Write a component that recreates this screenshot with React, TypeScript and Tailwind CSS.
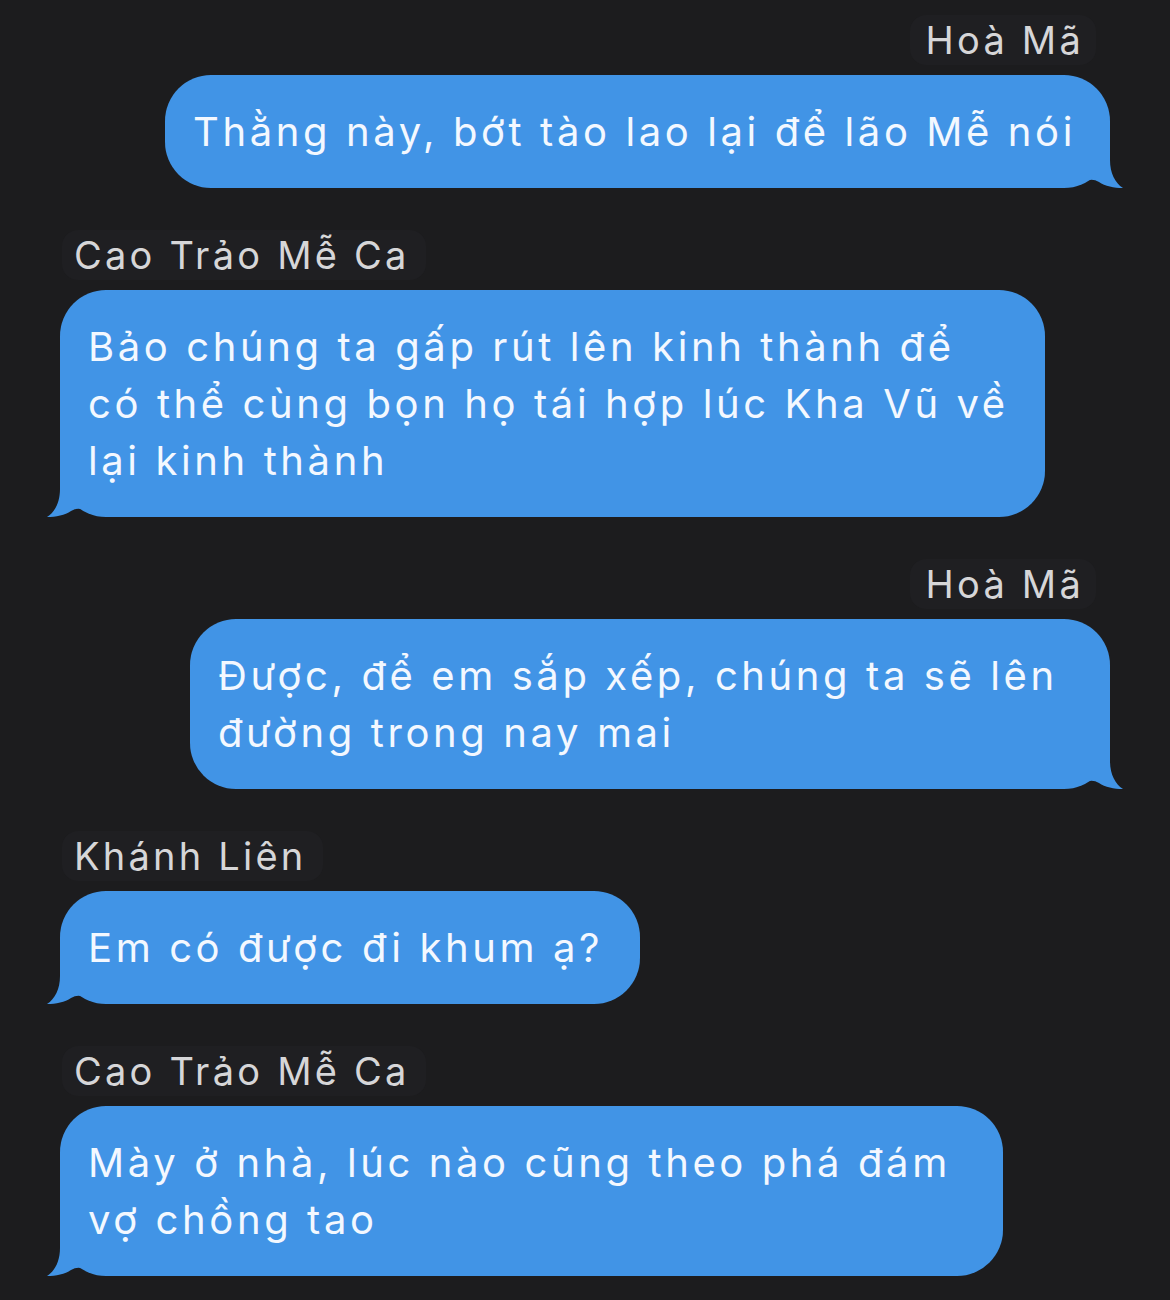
import React from "react";

type Msg = {
  name: string;
  side: "left" | "right";
  lines: string[];
  width: string;
};

const messages: Msg[] = [
  { name: "Hoà Mã", side: "right", lines: ["Thằng này, bớt tào lao lại để lão Mễ nói"], width: "w-[945px]" },
  {
    name: "Cao Trảo Mễ Ca",
    side: "left",
    lines: ["Bảo chúng ta gấp rút lên kinh thành để", "có thể cùng bọn họ tái hợp lúc Kha Vũ về", "lại kinh thành"],
    width: "w-[985px]",
  },
  { name: "Hoà Mã", side: "right", lines: ["Được, để em sắp xếp, chúng ta sẽ lên", "đường trong nay mai"], width: "w-[920px]" },
  { name: "Khánh Liên", side: "left", lines: ["Em có được đi khum ạ?"], width: "w-[580px]" },
  { name: "Cao Trảo Mễ Ca", side: "left", lines: ["Mày ở nhà, lúc nào cũng theo phá đám", "vợ chồng tao"], width: "w-[943px]" },
];

function Tail({ side }: { side: "left" | "right" }) {
  // bubble tail, drawn at the bottom corner
  return (
    <svg
      width="44"
      height="48"
      viewBox="0 0 44 48"
      className={`absolute bottom-0 ${side === "right" ? "right-[-13px]" : "left-[-13px] -scale-x-100"}`}
    >
      <path
        d="M0 0 L31 0 L31 20 C31 33 36 43 44 48 C35 48 26 46 20 42 Q15 39 10 40 L0 32 Z"
        fill="#4194e6"
      />
    </svg>
  );
}

function Bubble({ msg }: { msg: Msg }) {
  const right = msg.side === "right";
  return (
    <div className={`flex flex-col ${right ? "items-end" : "items-start"}`}>
      <div
        className={`h-[50px] leading-[50px] rounded-2xl bg-[#1f1f22] text-[38px] tracking-[0.085em] text-[#d6d6d8] ${
          right ? "mr-[14px] pl-4 pr-3" : "ml-[2px] pl-3 pr-4"
        }`}
      >
        {msg.name}
      </div>
      <div
        className={`relative mt-[10px] ${msg.width} rounded-[46px] bg-[#4194e6] pl-[28px] pr-[20px] py-[28px] text-[40px] tracking-[0.09em] leading-[57px] text-[#f3f8ff] whitespace-nowrap`}
      >
        {msg.lines.map((l, i) => (
          <div key={i}>{l}</div>
        ))}
        <Tail side={msg.side} />
      </div>
    </div>
  );
}

export default function App() {
  return (
    <div
      className="min-h-[1300px] w-[1170px] bg-[#1c1c1e] pt-[15px] pl-[60px] pr-[60px] flex flex-col gap-[42px]"
      style={{ fontFamily: "Inter, 'Noto Sans', sans-serif" }}
    >
      {messages.map((m, i) => (
        <Bubble key={i} msg={m} />
      ))}
    </div>
  );
}
